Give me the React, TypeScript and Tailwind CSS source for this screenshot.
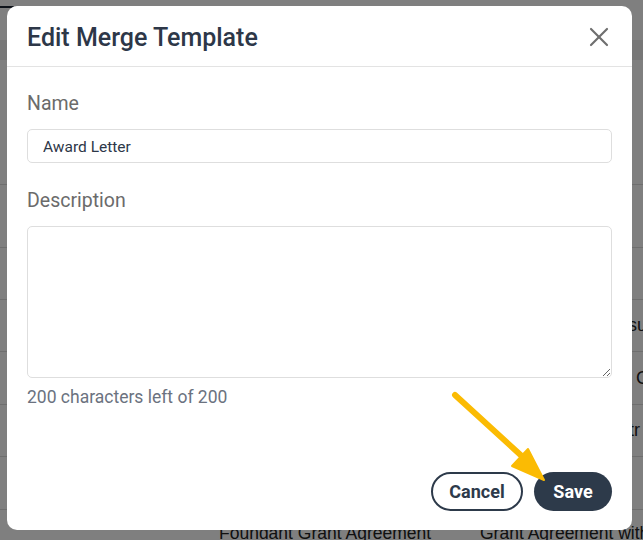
import { X } from 'lucide-react';

const rowBorder = 'border-b border-[#dcdcdc]';

function PageBehind() {
  return (
    <div className="h-[540px] overflow-hidden bg-white font-['Liberation_Sans',Arial,sans-serif] text-[18px] text-[#222]">
      <div className="h-[40px] pt-[6px]">
        <div className="h-[2px] w-[14px] bg-[#1f2937]" />
      </div>
      <div className="h-[20px] bg-[#eeeeee]" />
      <div className={`h-[125px] ${rowBorder}`} />
      <div className={`h-[63px] ${rowBorder}`} />
      <div className={`h-[52px] ${rowBorder}`} />
      <div className={`flex h-[52px] items-center pl-[628px] ${rowBorder}`}>su</div>
      <div className={`flex h-[53px] items-center pl-[636px] ${rowBorder}`}>C</div>
      <div className={`flex h-[52px] items-center pl-[629px] ${rowBorder}`}>tr</div>
      <div className={`h-[53px] ${rowBorder}`} />
      <div className="flex whitespace-nowrap pl-[219px] pt-[12px] text-[17.5px] leading-[22px]">
        <span className="w-[261px] shrink-0">Foundant Grant Agreement</span>
        <span className="shrink-0">Grant Agreement with</span>
      </div>
    </div>
  );
}

function EditTemplateModal() {
  return (
    <section className="ml-[7px] mt-[6px] flex h-[524px] w-[625px] flex-col rounded-[10px] bg-white font-['Roboto',sans-serif]">
      <header className="flex h-[61px] flex-none items-center justify-between border-b border-[#e3e3e3] pl-5 pr-[17px]">
        <h2 className="mt-[3px] text-[25px] font-medium text-[#2d3748]">Edit Merge Template</h2>
        <button type="button" aria-label="Close" className="mt-[2px] text-[#6f6f6f]">
          <X size={32} strokeWidth={1.6} />
        </button>
      </header>

      <div className="flex flex-1 flex-col px-5 pt-[25px]">
        <label className="text-[19.5px] leading-6 text-[#6b6b6b]">Name</label>
        <input
          defaultValue="Award Letter"
          className="mt-[13px] h-[34px] w-full rounded-[5px] border border-[#dedede] px-[15px] pt-[2px] text-[15.5px] text-[#2d3748] outline-none"
        />

        <label className="mt-[26px] text-[19.5px] leading-6 text-[#6b6b6b]">Description</label>
        <textarea className="mt-[13px] h-[152px] w-full rounded-[5px] border border-[#dedede] px-[15px] py-2 text-[16px] outline-none" />
        <p className="mt-[7px] text-[17.5px] leading-6 text-[#6b7280]">200 characters left of 200</p>

        <div className="mt-auto flex justify-end gap-[11px] pb-[19px]">
          <button
            type="button"
            className="h-[39px] w-[92px] rounded-full border-2 border-[#2d3a4a] text-[18px] font-bold text-[#2d3a4a]"
          >
            Cancel
          </button>
          <button type="button" className="h-[39px] w-[78px] rounded-full bg-[#2d3a4a] text-[18px] font-bold text-white">
            Save
          </button>
        </div>
      </div>
    </section>
  );
}

export default function App() {
  return (
    <div className="relative h-[540px] w-[643px] overflow-hidden">
      <PageBehind />
      <div className="absolute inset-0 bg-black/50">
        <EditTemplateModal />
      </div>
      {/* callout arrow pointing at Save */}
      <svg className="pointer-events-none absolute inset-0" width="643" height="540" viewBox="0 0 643 540">
        <line x1="455" y1="395" x2="525" y2="459" stroke="#fbbb03" strokeWidth="6" strokeLinecap="round" />
        <polygon points="544,480 512,466 528,449" fill="#fbbb03" stroke="#fbbb03" strokeWidth="2" strokeLinejoin="round" />
      </svg>
    </div>
  );
}
